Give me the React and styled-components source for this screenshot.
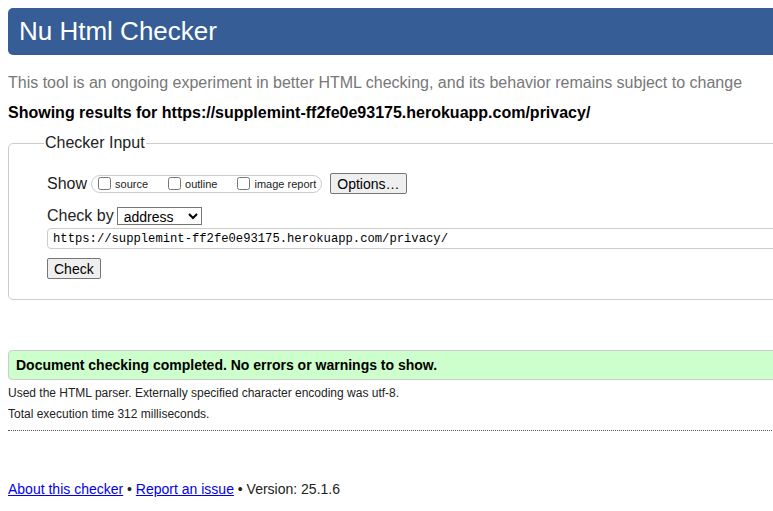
import React from "react";
import styled, { createGlobalStyle } from "styled-components";

const Global = createGlobalStyle`
  html, body { margin: 0; padding: 0; background: #fff; overflow: hidden; }
  body { padding: 8px; font-family: "Liberation Sans", Arial, sans-serif; color: #222; width: 1000px; }
`;

const Header = styled.h1`
  margin: 0;
  background: #365d95;
  color: #fff;
  border-radius: 5px;
  height: 47px;
  display: flex;
  align-items: center;
  padding: 0 11px;
  font-size: 26px;
  font-weight: normal;
`;

const Intro = styled.p`
  margin: 18px 0 0;
  font-size: 16px;
  line-height: 20px;
  color: #777;
`;

const Showing = styled.p`
  margin: 10px 0 0;
  font-size: 16px;
  line-height: 20px;
  font-weight: bold;
  color: #000;
`;

const Form = styled.fieldset`
  margin: 11px 0 0;
  border: 1px solid #ccc;
  border-radius: 5px;
  padding: 10px 38px 20px 38px;
`;

const Legend = styled.legend`
  font-size: 16px;
  padding: 0 1px;
  margin-left: -3px;
  color: #222;
`;

const Row = styled.div`
  display: flex;
  align-items: center;
  gap: ${(p) => p.$gap || 0}px;
  margin-top: ${(p) => p.$mt || 0}px;
`;

const Label = styled.span`
  font-size: 16px;
  color: #222;
`;

const Group = styled.fieldset`
  margin: 0 0 0 4px;
  padding: 0 5px 0 6px;
  border: 1px solid #ccc;
  border-radius: 9px;
  height: 18px;
  display: flex;
  align-items: center;
  gap: 20px;
  box-sizing: border-box;
`;

const Check = styled.label`
  display: flex;
  align-items: center;
  font-size: 11px;
  color: #222;
  input { margin: 0 4px 0 0; width: 13px; height: 13px; }
`;

const Button = styled.button`
  font-family: "Liberation Sans", Arial, sans-serif;
  font-size: 14px;
  height: 21px;
  padding: 0 6px;
  border: 1px solid #767676;
  border-radius: 2px;
  background: #efefef;
  color: #000;
  margin-left: ${(p) => p.$ml || 0}px;
`;

const Select = styled.select`
  font-family: "Liberation Sans", Arial, sans-serif;
  font-size: 14px;
  width: 85px;
  height: 18px;
  margin-left: 3px;
  border: 1px solid #767676;
  border-radius: 0;
  padding: 0 0 0 2px;
  color: #000;
  background: #fff;
`;

const UrlInput = styled.input`
  display: block;
  box-sizing: border-box;
  width: 900px;
  height: 21px;
  margin-top: 3px;
  border: 1px solid #ccc;
  border-radius: 4px;
  padding: 0 5px;
  font-family: "Liberation Mono", "DejaVu Sans Mono", monospace;
  font-size: 12.2px;
  color: #000;
`;

const Success = styled.div`
  margin-top: 50px;
  background: #ccffcc;
  border: 1px solid #ccc;
  border-radius: 4px;
  height: 30px;
  box-sizing: border-box;
  display: flex;
  align-items: center;
  padding-left: 7px;
  font-size: 14px;
  font-weight: bold;
  color: #000;
`;

const Note = styled.p`
  margin: ${(p) => p.$mt || 0}px 0 0;
  font-size: 12px;
  line-height: 14px;
  color: #222;
`;

const Rule = styled.hr`
  margin: 9px 0 0;
  border: 0;
  border-top: 1px dotted #555;
`;

const Footer = styled.p`
  margin: 50px 0 0;
  font-size: 14px;
  line-height: 16px;
  color: #222;
  a { color: #0000ee; text-decoration: underline; }
`;

export default function App() {
  return (
    <>
      <Global />
      <Header>Nu Html Checker</Header>
      <Intro>This tool is an ongoing experiment in better HTML checking, and its behavior remains subject to change</Intro>
      <Showing>Showing results for https://supplemint-ff2fe0e93175.herokuapp.com/privacy/</Showing>
      <Form>
        <Legend>Checker Input</Legend>
        <Row $mt={11}>
          <Label>Show</Label>
          <Group>
            <Check><input type="checkbox" />source</Check>
            <Check><input type="checkbox" />outline</Check>
            <Check><input type="checkbox" />image report</Check>
          </Group>
          <Button type="button" $ml={8}>Options…</Button>
        </Row>
        <Row $mt={13}>
          <Label>Check by</Label>
          <Select defaultValue="address">
            <option value="address">address</option>
            <option value="file">file upload</option>
            <option value="text">text input</option>
          </Select>
        </Row>
        <UrlInput defaultValue="https://supplemint-ff2fe0e93175.herokuapp.com/privacy/" />
        <Row $mt={9}>
          <Button type="button">Check</Button>
        </Row>
      </Form>
      <Success>Document checking completed. No errors or warnings to show.</Success>
      <Note $mt={6}>Used the HTML parser. Externally specified character encoding was utf-8.</Note>
      <Note $mt={7}>Total execution time 312 milliseconds.</Note>
      <Rule />
      <Footer>
        <a href="#about">About this checker</a> • <a href="#report">Report an issue</a> • Version: 25.1.6
      </Footer>
    </>
  );
}
